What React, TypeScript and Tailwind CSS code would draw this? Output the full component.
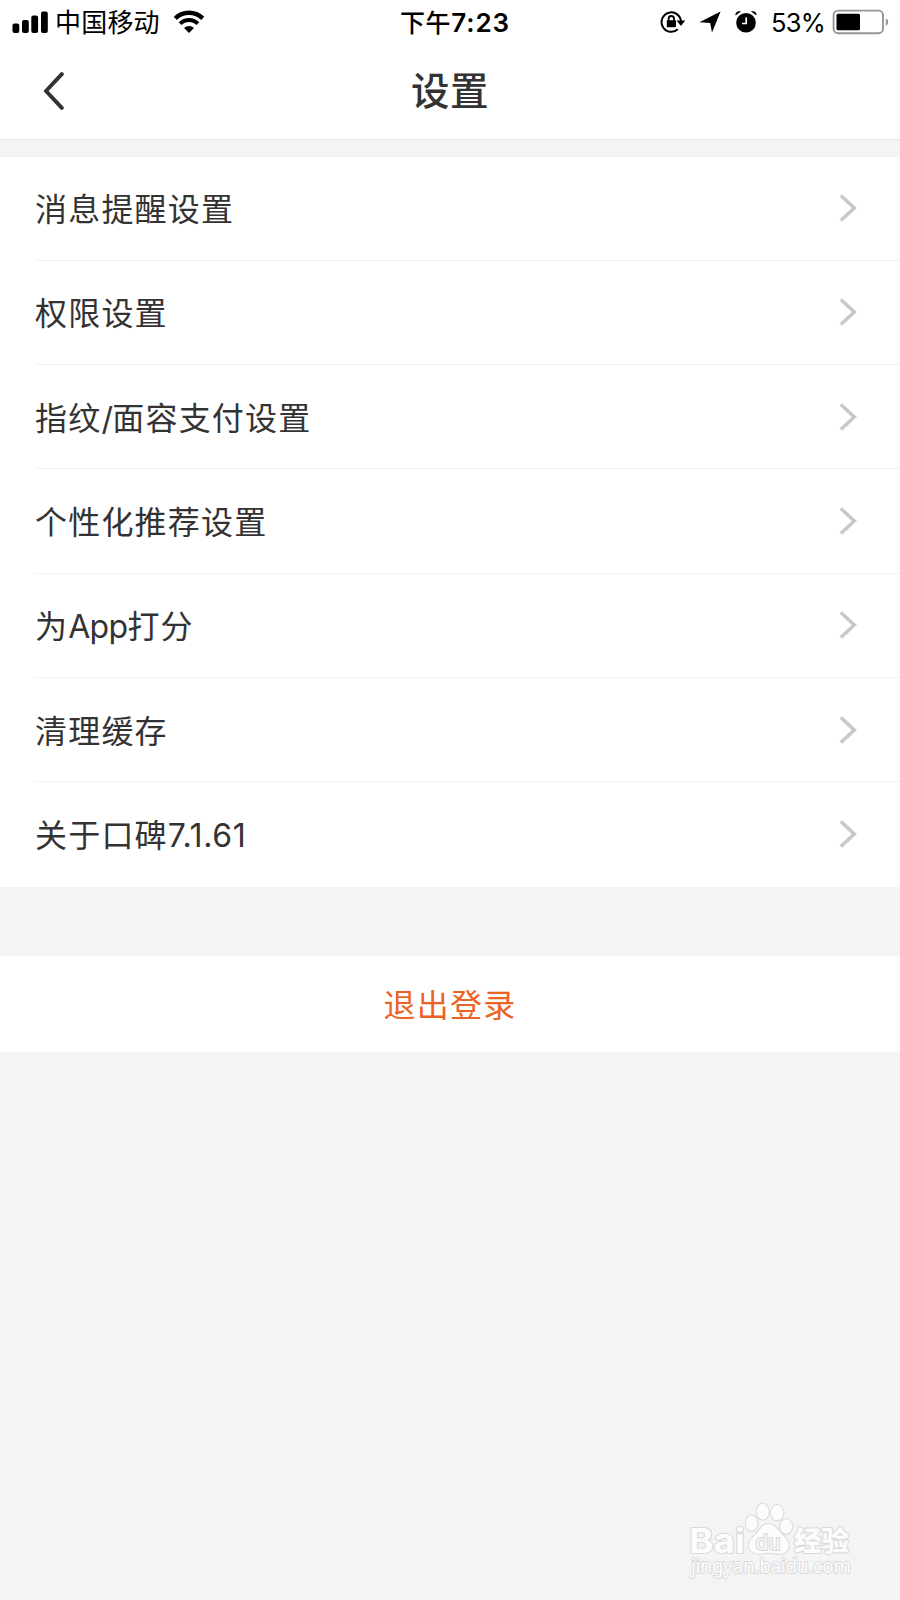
import { Fragment } from "react";
import { clsx } from "clsx";

const MENU_ITEMS = [
  "消息提醒设置",
  "权限设置",
  "指纹/面容支付设置",
  "个性化推荐设置",
  "为App打分",
  "清理缓存",
  "关于口碑7.1.61",
];

function SignalIcon() {
  return (
    <svg width="36" height="23" viewBox="0 0 36 23" className="shrink-0">
      <rect x="0.5" y="12.5" width="6.8" height="9.5" rx="2" />
      <rect x="10" y="9" width="6.8" height="13" rx="2" />
      <rect x="19.3" y="4.5" width="6.8" height="17.5" rx="2" />
      <rect x="29" y="0.5" width="6.8" height="21.5" rx="2" />
    </svg>
  );
}

function WifiIcon() {
  return (
    <svg width="32" height="24" viewBox="0 0 32 24" fill="none" stroke="#000" className="shrink-0">
      <path d="M2.3 8.4a19.4 19.4 0 0 1 27.4 0" strokeWidth="4.4" />
      <path d="M7.1 13.7a12.6 12.6 0 0 1 17.8 0" strokeWidth="3.9" />
      <path d="M11 18a7.1 7.1 0 0 1 10 0L16 23z" fill="#000" stroke="none" />
    </svg>
  );
}

function RotationLockIcon() {
  return (
    <svg width="26" height="24" viewBox="0 0 26 24" fill="none" stroke="#000" className="shrink-0">
      <path d="M21 12A9.7 9.7 0 1 0 17.8 19.3" strokeWidth="2" />
      <path d="M16.4 10.4h8.8L21 16z" fill="#000" stroke="none" />
      <path d="M8.6 11V8.7a2.7 2.7 0 0 1 5.4 0V11" strokeWidth="1.8" />
      <rect x="6.8" y="10.3" width="9.2" height="7" rx="0.8" fill="#000" stroke="none" />
    </svg>
  );
}

function LocationIcon() {
  return (
    <svg width="22" height="22" viewBox="0 0 22 22" className="shrink-0">
      <path d="M21.6 0.4 13 21.6 11.2 12 0.4 11.2z" />
    </svg>
  );
}

function AlarmIcon() {
  return (
    <svg width="22" height="24" viewBox="0 0 22 24" className="shrink-0">
      <circle cx="11" cy="12.8" r="9.8" />
      <path d="M11.2 7.5v6H7" fill="none" stroke="#fff" strokeWidth="1.7" />
      <path d="M0.6 5.4C0 3 2.4 0.6 6 1.6zM21.4 5.4C22 3 19.6 0.6 16 1.6z" />
    </svg>
  );
}

function BatteryIcon() {
  return (
    <svg width="58" height="26" viewBox="0 0 58 26" className="shrink-0">
      <rect x="1.6" y="1.6" width="49.4" height="22.6" rx="4.5" fill="#fff" stroke="#969696" strokeWidth="1.9" />
      <rect x="4.5" y="4.8" width="23.5" height="16.4" rx="1.5" />
      <path d="M53.8 9.5c3.2 1 3.2 6.2 0 7.2z" fill="#969696" />
    </svg>
  );
}

function StatusBar() {
  return (
    <div className="grid h-11 grid-cols-3 items-center pr-2.5 pl-3 text-black">
      <div className="flex items-center">
        <SignalIcon />
        <span className="ml-[7px] pb-[2px] text-[26px] leading-none tracking-[0.2px]">中国移动</span>
        <span className="ml-[13px]">
          <WifiIcon />
        </span>
      </div>
      <div className="flex items-baseline justify-center pl-2 text-[25px] leading-none font-medium tracking-[0.7px]">
        下午<span className="font-['Inter'] text-[26px] font-semibold tracking-[0.9px]">7:23</span>
      </div>
      <div className="flex items-center justify-end">
        <RotationLockIcon />
        <span className="ml-[13px]">
          <LocationIcon />
        </span>
        <span className="ml-[14px]">
          <AlarmIcon />
        </span>
        <span className="ml-[14px] pt-0.5 font-['Inter'] text-[25.5px] leading-none tracking-[-0.8px]">53%</span>
        <span className="ml-[7px]">
          <BatteryIcon />
        </span>
      </div>
    </div>
  );
}

// Latin runs use their own face and tighter tracking than the Chinese text
function MixedLabel({ text }: { text: string }) {
  const parts = text.split(/([A-Za-z0-9./]+)/);
  return (
    <span className="block pb-[2px] text-[32px] leading-[40px] tracking-[1.2px]">
      {parts.map((part, i) =>
        i % 2 === 1 ? (
          <span
            key={i}
            className={clsx(
              "font-['Inter'] leading-[0]",
              part.startsWith("7") ? "tracking-[0.6px]" : "tracking-[-0.7px]"
            )}
          >
            {part}
          </span>
        ) : (
          <Fragment key={i}>{part}</Fragment>
        )
      )}
    </span>
  );
}

function MenuRow({ label, last }: { label: string; last: boolean }) {
  return (
    <button
      className={clsx(
        "ml-[35px] flex h-[104.3px] items-center justify-between pr-[43px] text-left",
        !last && "border-b border-[#f1f1f1]"
      )}
    >
      <MixedLabel text={label} />
      <svg width="18" height="28" viewBox="0 0 18 28" fill="none" stroke="#c7c7cc" strokeWidth="3.6">
        <path d="M1.8 1.5 15.3 14 1.8 26.5" />
      </svg>
    </button>
  );
}

function Watermark() {
  return (
    <svg
      width="200"
      height="100"
      viewBox="0 0 200 100"
      className="absolute right-[30px] bottom-[10px]"
      fill="#fcfcfc"
      stroke="#d9d9d9"
      strokeWidth="2"
      strokeLinejoin="round"
      paintOrder="stroke"
    >
      <text
        x="19"
        y="62.5"
        fontFamily="Inter, sans-serif"
        fontWeight="700"
        fontSize="34"
        textLength="56"
        lengthAdjust="spacingAndGlyphs"
      >
        Bai
      </text>
      <ellipse cx="92.7" cy="21.7" rx="6" ry="8" />
      <ellipse cx="107.2" cy="22.8" rx="6.2" ry="7.8" />
      <ellipse cx="81.6" cy="33.2" rx="5.8" ry="7.6" />
      <ellipse cx="116.2" cy="36.6" rx="6" ry="7.4" />
      <path d="M98.5 34c5.5 0 8.5 4.6 12.5 9.2 4.2 4.8 8 7 7.8 12.3-.2 5.3-4.6 8.3-9.5 8.3-4 0-6.8-1-10.8-1s-6.6 1-10.6 1c-5 0-8.9-3.5-9-8.6-.1-5.2 3.8-7.5 7.6-12 4-4.7 6.5-9.2 12-9.2z" />
      <text
        x="85.5"
        y="59.5"
        fill="#f4f4f4"
        fontFamily="Inter, sans-serif"
        fontWeight="500"
        fontSize="21"
        textLength="25"
        lengthAdjust="spacingAndGlyphs"
      >
        du
      </text>
      <text x="124" y="61" fontFamily="'Noto Sans CJK SC', sans-serif" fontWeight="900" fontSize="27.5">
        经验
      </text>
      <text x="21" y="83" strokeWidth="1.8" fontFamily="'Noto Sans', sans-serif" fontSize="19" textLength="160">
        jingyan.baidu.com
      </text>
    </svg>
  );
}

export default function App() {
  return (
    <div className="relative flex h-[1600px] w-[900px] flex-col overflow-hidden bg-[#f4f4f4] font-['Noto_Sans_CJK_SC',sans-serif] text-[#333]">
      <header className="h-[139.5px] border-b border-[#e8e8e8] bg-white">
        <StatusBar />
        <div className="grid h-[94px] grid-cols-3 items-center">
          <button aria-label="返回" className="ml-[43px] w-fit">
            <svg
              width="22"
              height="38"
              viewBox="0 0 22 38"
              fill="none"
              stroke="#333"
              strokeWidth="4"
              strokeLinecap="round"
              strokeLinejoin="round"
            >
              <path d="M18.8 2.2 3 19 18.8 35.8" />
            </svg>
          </button>
          <h1 className="pb-[5px] text-center text-[38.5px] leading-none font-medium tracking-[0.5px]">设置</h1>
        </div>
      </header>

      <main>
        <nav className="mt-[17px] flex flex-col bg-white">
          {MENU_ITEMS.map((item, i) => (
            <MenuRow key={item} label={item} last={i === MENU_ITEMS.length - 1} />
          ))}
        </nav>
        <button className="mt-[69.5px] flex h-[96px] w-full items-center justify-center bg-white pb-[2px] text-[32px] leading-none tracking-[1.2px] text-[#eb6425]">
          退出登录
        </button>
      </main>

      <Watermark />
    </div>
  );
}
